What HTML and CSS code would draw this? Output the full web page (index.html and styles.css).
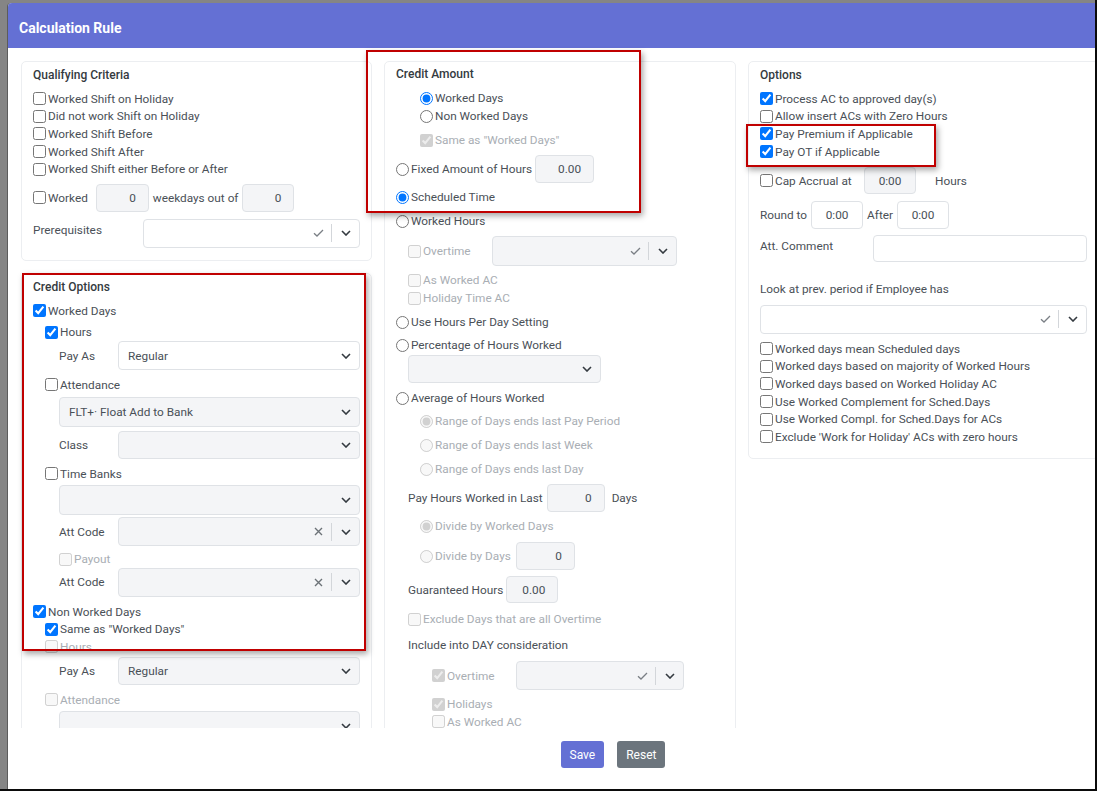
FILE: index.html
```html
<!DOCTYPE html>
<html>
<head>
<meta charset="utf-8">
<title>Calculation Rule</title>
<link rel="stylesheet" href="styles.css">
</head>
<body>
<div class="screen">
  <div class="modal">
    <div class="mh">Calculation Rule</div>
    <div class="mb">
      <!-- Column 1 -->
      <div class="col">
        <section class="card">
          <div class="ct">Qualifying Criteria</div>
          <label class="ck"><input type="checkbox">Worked Shift on Holiday</label>
          <label class="ck"><input type="checkbox">Did not work Shift on Holiday</label>
          <label class="ck"><input type="checkbox">Worked Shift Before</label>
          <label class="ck"><input type="checkbox">Worked Shift After</label>
          <label class="ck"><input type="checkbox">Worked Shift either Before or After</label>
          <div class="line mt6">
            <label class="ck wk"><input type="checkbox">Worked</label>
            <span class="inp w53">0</span>
            <span class="tx mx4">weekdays out of</span>
            <span class="inp w52">0</span>
          </div>
          <div class="line top mt7">
            <span class="lbl lw110">Prerequisites</span>
            <div class="sel w217">
              <span class="sv"></span>
              <span class="sx"><svg width="11" height="8" viewBox="0 0 11 8"><path d="M1 4.2l3 2.8 6-6" fill="none" stroke="#7a7f85" stroke-width="1.3"/></svg></span>
              <span class="sd"></span>
              <span class="si"><svg width="10" height="6" viewBox="0 0 10 6"><path d="M1 1l4 4 4-4" fill="none" stroke="#343a40" stroke-width="1.6"/></svg></span>
            </div>
          </div>
        </section>

        <section class="card tall">
          <div class="ct">Credit Options</div>
          <label class="ck"><input type="checkbox" checked>Worked Days</label>
          <label class="ck i1 mt4"><input type="checkbox" checked>Hours</label>
          <div class="line i2">
            <span class="lbl lw59">Pay As</span>
            <div class="sel w242"><span class="sv">Regular</span><span class="si"><svg width="10" height="6" viewBox="0 0 10 6"><path d="M1 1l4 4 4-4" fill="none" stroke="#343a40" stroke-width="1.6"/></svg></span></div>
          </div>
          <label class="ck i1 mt6"><input type="checkbox">Attendance</label>
          <div class="sel gray h30 i2 mt3"><span class="sv">FLT+· Float Add to Bank</span><span class="si"><svg width="10" height="6" viewBox="0 0 10 6"><path d="M1 1l4 4 4-4" fill="none" stroke="#343a40" stroke-width="1.6"/></svg></span></div>
          <div class="line i2 mt4">
            <span class="lbl lw59">Class</span>
            <div class="sel gray w242 h28"><span class="sv"></span><span class="si"><svg width="10" height="6" viewBox="0 0 10 6"><path d="M1 1l4 4 4-4" fill="none" stroke="#343a40" stroke-width="1.6"/></svg></span></div>
          </div>
          <label class="ck i1 mt6"><input type="checkbox">Time Banks</label>
          <div class="sel gray h30 i2 mt3"><span class="sv"></span><span class="si"><svg width="10" height="6" viewBox="0 0 10 6"><path d="M1 1l4 4 4-4" fill="none" stroke="#343a40" stroke-width="1.6"/></svg></span></div>
          <div class="line i2 mt2">
            <span class="lbl lw59">Att Code</span>
            <div class="sel gray w242">
              <span class="sv"></span>
              <span class="sx"><svg width="9" height="9" viewBox="0 0 9 9"><path d="M1 1l7 7M8 1L1 8" fill="none" stroke="#6c7277" stroke-width="1.4"/></svg></span>
              <span class="sd"></span>
              <span class="si"><svg width="10" height="6" viewBox="0 0 10 6"><path d="M1 1l4 4 4-4" fill="none" stroke="#343a40" stroke-width="1.6"/></svg></span>
            </div>
          </div>
          <label class="ck i2 mt4 dis"><input type="checkbox" disabled>Payout</label>
          <div class="line i2">
            <span class="lbl lw59">Att Code</span>
            <div class="sel gray w242">
              <span class="sv"></span>
              <span class="sx"><svg width="9" height="9" viewBox="0 0 9 9"><path d="M1 1l7 7M8 1L1 8" fill="none" stroke="#6c7277" stroke-width="1.4"/></svg></span>
              <span class="sd"></span>
              <span class="si"><svg width="10" height="6" viewBox="0 0 10 6"><path d="M1 1l4 4 4-4" fill="none" stroke="#343a40" stroke-width="1.6"/></svg></span>
            </div>
          </div>
          <label class="ck mt6"><input type="checkbox" checked>Non Worked Days</label>
          <label class="ck i1"><input type="checkbox" checked>Same as "Worked Days"</label>
          <label class="ck i1 dis"><input type="checkbox" disabled>Hours</label>
          <div class="line i2 mt1">
            <span class="lbl lw59">Pay As</span>
            <div class="sel gray w242 h28"><span class="sv">Regular</span><span class="si"><svg width="10" height="6" viewBox="0 0 10 6"><path d="M1 1l4 4 4-4" fill="none" stroke="#343a40" stroke-width="1.6"/></svg></span></div>
          </div>
          <label class="ck i1 mt6 dis"><input type="checkbox" disabled>Attendance</label>
          <div class="sel gray h30 i2 mt3"><span class="sv"></span><span class="si"><svg width="10" height="6" viewBox="0 0 10 6"><path d="M1 1l4 4 4-4" fill="none" stroke="#343a40" stroke-width="1.6"/></svg></span></div>
        </section>
      </div>

      <!-- Column 2 -->
      <div class="col mid">
        <section class="card tall">
          <div class="ct">Credit Amount</div>
          <label class="ck i2"><input type="radio" name="wd" checked>Worked Days</label>
          <label class="ck i2"><input type="radio" name="wd">Non Worked Days</label>
          <label class="ck i2 mt6 dis"><input type="checkbox" checked disabled>Same as "Worked Days"</label>
          <div class="line mt6">
            <label class="ck"><input type="radio" name="ca">Fixed Amount of Hours</label>
            <span class="inp w59 ml3">0.00</span>
          </div>
          <label class="ck mt5"><input type="radio" name="ca" checked>Scheduled Time</label>
          <label class="ck mt6"><input type="radio" name="ca">Worked Hours</label>
          <div class="line i1 mt6">
            <label class="ck dis lw84"><input type="checkbox" disabled>Overtime</label>
            <div class="sel gray w185 h30">
              <span class="sv"></span>
              <span class="sx"><svg width="11" height="8" viewBox="0 0 11 8"><path d="M1 4.2l3 2.8 6-6" fill="none" stroke="#7a7f85" stroke-width="1.3"/></svg></span>
              <span class="sd"></span>
              <span class="si"><svg width="10" height="6" viewBox="0 0 10 6"><path d="M1 1l4 4 4-4" fill="none" stroke="#343a40" stroke-width="1.6"/></svg></span>
            </div>
          </div>
          <label class="ck i1 mt5 dis"><input type="checkbox" disabled>As Worked AC</label>
          <label class="ck i1 dis"><input type="checkbox" disabled>Holiday Time AC</label>
          <label class="ck mt6"><input type="radio" name="ca">Use Hours Per Day Setting</label>
          <label class="ck mt5"><input type="radio" name="ca">Percentage of Hours Worked</label>
          <div class="sel gray w193 h28 i1 mt1"><span class="sv"></span><span class="si"><svg width="10" height="6" viewBox="0 0 10 6"><path d="M1 1l4 4 4-4" fill="none" stroke="#343a40" stroke-width="1.6"/></svg></span></div>
          <label class="ck mt6"><input type="radio" name="ca">Average of Hours Worked</label>
          <label class="ck i2 mt5 dis"><input type="radio" name="rg" checked disabled>Range of Days ends last Pay Period</label>
          <label class="ck i2 mt6 dis"><input type="radio" name="rg" disabled>Range of Days ends last Week</label>
          <label class="ck i2 mt6 dis"><input type="radio" name="rg" disabled>Range of Days ends last Day</label>
          <div class="line i1 mt6">
            <span class="tx">Pay Hours Worked in Last</span>
            <span class="inp w58 ml4">0</span>
            <span class="tx ml7">Days</span>
          </div>
          <label class="ck i2 mt5 dis"><input type="radio" name="dv" checked disabled>Divide by Worked Days</label>
          <div class="line i2 mt7">
            <label class="ck dis"><input type="radio" name="dv" disabled>Divide by Days</label>
            <span class="inp w59 ml5">0</span>
          </div>
          <div class="line i1 mt6">
            <span class="tx">Guaranteed Hours</span>
            <span class="inp w52 h27 ml3">0.00</span>
          </div>
          <label class="ck i1 mt7 dis"><input type="checkbox" disabled>Exclude Days that are all Overtime</label>
          <div class="tx i1 mt8 lh18">Include into DAY consideration</div>
          <div class="line i3 mt7">
            <label class="ck dis lw84"><input type="checkbox" checked disabled>Overtime</label>
            <div class="sel gray w168">
              <span class="sv"></span>
              <span class="sx"><svg width="11" height="8" viewBox="0 0 11 8"><path d="M1 4.2l3 2.8 6-6" fill="none" stroke="#7a7f85" stroke-width="1.3"/></svg></span>
              <span class="sd"></span>
              <span class="si"><svg width="10" height="6" viewBox="0 0 10 6"><path d="M1 1l4 4 4-4" fill="none" stroke="#343a40" stroke-width="1.6"/></svg></span>
            </div>
          </div>
          <label class="ck i3 mt5 dis"><input type="checkbox" checked disabled>Holidays</label>
          <label class="ck i3 dis sq"><input type="checkbox" disabled>As Worked AC</label>
        </section>
      </div>

      <!-- Column 3 -->
      <div class="col">
        <section class="card">
          <div class="ct">Options</div>
          <label class="ck"><input type="checkbox" checked>Process AC to approved day(s)</label>
          <label class="ck"><input type="checkbox">Allow insert ACs with Zero Hours</label>
          <label class="ck"><input type="checkbox" checked>Pay Premium if Applicable</label>
          <label class="ck"><input type="checkbox" checked>Pay OT if Applicable</label>
          <div class="line mt7">
            <label class="ck lw104"><input type="checkbox">Cap Accrual at</label>
            <span class="inp c w52 h27">0:00</span>
            <span class="tx ml19">Hours</span>
          </div>
          <div class="line mt7">
            <span class="tx">Round to</span>
            <span class="inp c wh w52 ml4">0:00</span>
            <span class="tx mx4">After</span>
            <span class="inp c wh w52">0:00</span>
          </div>
          <div class="line top mt6">
            <span class="lbl lw113">Att. Comment</span>
            <span class="inp wh w214 h27"></span>
          </div>
          <div class="tx lh mt19">Look at prev. period if Employee has</div>
          <div class="sel mt6">
            <span class="sv"></span>
            <span class="sx"><svg width="11" height="8" viewBox="0 0 11 8"><path d="M1 4.2l3 2.8 6-6" fill="none" stroke="#7a7f85" stroke-width="1.3"/></svg></span>
            <span class="sd"></span>
            <span class="si"><svg width="10" height="6" viewBox="0 0 10 6"><path d="M1 1l4 4 4-4" fill="none" stroke="#343a40" stroke-width="1.6"/></svg></span>
          </div>
          <label class="ck mt6"><input type="checkbox">Worked days mean Scheduled days</label>
          <label class="ck"><input type="checkbox">Worked days based on majority of Worked Hours</label>
          <label class="ck"><input type="checkbox">Worked days based on Worked Holiday AC</label>
          <label class="ck"><input type="checkbox">Use Worked Complement for Sched.Days</label>
          <label class="ck"><input type="checkbox">Use Worked Compl. for Sched.Days for ACs</label>
          <label class="ck"><input type="checkbox">Exclude 'Work for Holiday' ACs with zero hours</label>
        </section>
      </div>
    </div>
    <div class="mf">
      <button class="btn save">Save</button>
      <button class="btn reset">Reset</button>
    </div>
  </div>

  <div class="ann ann1"></div>
  <div class="ann ann2"></div>
  <div class="ann ann3"></div>
</div>
</body>
</html>
```

FILE: styles.css
```css
* { box-sizing: border-box; }
html, body { margin: 0; padding: 0; background: #858585; }
body {
  font-family: Roboto, "Liberation Sans", Arial, sans-serif;
  font-size: 11.8px;
  color: #4a5057;
}

.screen {
  position: relative;
  width: 1097px;
  height: 791px;
  overflow: hidden;
  background: #858585;
  padding: 3px 0 0 8px;
  border-right: 2px solid #0b0b0b;
  border-bottom: 2px solid #0b0b0b;
}

.modal {
  width: 1210px;
  height: 786px;
  background: #fff;
  border-radius: 4px 0 0 0;
  box-shadow: -1px 0 0 #5c5c5c;
}

.mh {
  height: 45px;
  background: #6470d4;
  color: #fff;
  font-weight: 700;
  font-size: 14px;
  display: flex;
  align-items: center;
  padding: 4px 0 0 11px;
  border-radius: 4px 0 0 0;
}

.mb {
  height: 680px;
  overflow: hidden;
  padding: 13px 0 0 13px;
  display: grid;
  grid-template-columns: 351px 352px 351px;
  column-gap: 12px;
  align-items: start;
}

.mf {
  display: flex;
  justify-content: center;
  gap: 13px;
  padding-top: 13px;
}

.btn {
  height: 27px;
  padding: 0 9px;
  border: 0;
  border-radius: 3px;
  color: #fff;
  font: inherit;
  font-size: 12px;
  display: flex;
  align-items: center;
}
.btn.save { background: #6470d4; }
.btn.reset { background: #6c757d; }

.card {
  background: #fff;
  border: 1px solid #eceef1;
  border-radius: 5px;
  padding: 5px 11px 12px;
}
.card + .card { margin-top: 12px; }
.card.tall { min-height: 800px; }
.mid .card { padding-top: 4px; }

.ct {
  font-weight: 500;
  font-size: 12px;
  color: #343a40;
  line-height: 16px;
  margin-bottom: 7px;
}

.ck {
  display: flex;
  align-items: center;
  height: 17.6px;
  white-space: nowrap;
}
.mid .ck { height: 18px; }
.mid .ck.sq { height: 17px; }
.ck input {
  margin: 0 2px 0 0;
  width: 13px;
  height: 13px;
  flex: none;
}
.dis { color: #a9aeb4; }

.line { display: flex; align-items: center; }
.line.top { align-items: flex-start; }
.tx { white-space: nowrap; }
.lh { line-height: 17.6px; }
.lh18 { line-height: 18px; }
.lbl { flex: none; white-space: nowrap; }
.line.top .lbl { padding-top: 3px; line-height: 17.6px; }

.wk { margin-right: 8px; }

.inp {
  flex: none;
  height: 28px;
  border: 1px solid #dfe2e6;
  border-radius: 4px;
  background: #f4f5f7;
  display: flex;
  align-items: center;
  justify-content: flex-end;
  padding: 0 12px;
  color: #495057;
}
.inp.c { justify-content: center; padding: 0; }
.inp.wh { background: #fff; }

.sel {
  flex: none;
  height: 29px;
  border: 1px solid #dfe2e6;
  border-radius: 4px;
  background: #fff;
  display: flex;
  align-items: center;
  color: #495057;
}
.sel.gray { background: #f4f5f7; }
.sv { flex: 1; padding-left: 9px; white-space: nowrap; overflow: hidden; }
.sx { width: 26px; display: flex; justify-content: center; align-items: center; }
.sd { width: 1px; height: 18px; background: #d3d6da; }
.si { width: 27px; display: flex; justify-content: center; align-items: center; }
.sel svg { display: block; }

/* sizes */
.w52 { width: 52px; }
.w53 { width: 53px; }
.w58 { width: 58px; }
.w59 { width: 59px; }
.w168 { width: 168px; }
.w185 { width: 185px; }
.w193 { width: 193px; }
.w214 { width: 214px; }
.w217 { width: 217px; }
.w242 { width: 242px; }
.h27 { height: 27px; }
.h28 { height: 28px; }
.h30 { height: 30px; }

.lw59 { width: 59px; }
.lw84 { width: 84px; }
.lw104 { width: 104px; }
.lw110 { width: 110px; }
.lw113 { width: 113px; }

/* indents */
.i1 { margin-left: 12px; }
.i2 { margin-left: 24px; }
.i3 { margin-left: 36px; }
.col:first-child .i2 { margin-left: 26px; }

/* spacing */
.mt1 { margin-top: 1px; }
.mt2 { margin-top: 2px; }
.mt3 { margin-top: 3px; }
.mt4 { margin-top: 4px; }
.mt5 { margin-top: 5px; }
.mt6 { margin-top: 6px; }
.mt7 { margin-top: 7px; }
.mt8 { margin-top: 8px; }
.mt19 { margin-top: 19px; }
.ml3 { margin-left: 3px; }
.ml4 { margin-left: 4px; }
.ml5 { margin-left: 5px; }
.ml7 { margin-left: 7px; }
.ml19 { margin-left: 19px; }
.mx4 { margin: 0 4px; }

/* annotation highlight boxes */
.ann {
  position: absolute;
  border: 2px solid #c00000;
  box-shadow: 2px 3px 6px rgba(0, 0, 0, 0.35);
  pointer-events: none;
}
.ann1 { left: 22px; top: 273px; width: 344px; height: 378px; }
.ann2 { left: 366px; top: 50px; width: 275px; height: 163px; }
.ann3 { left: 746px; top: 124px; width: 190px; height: 43px; }
```
